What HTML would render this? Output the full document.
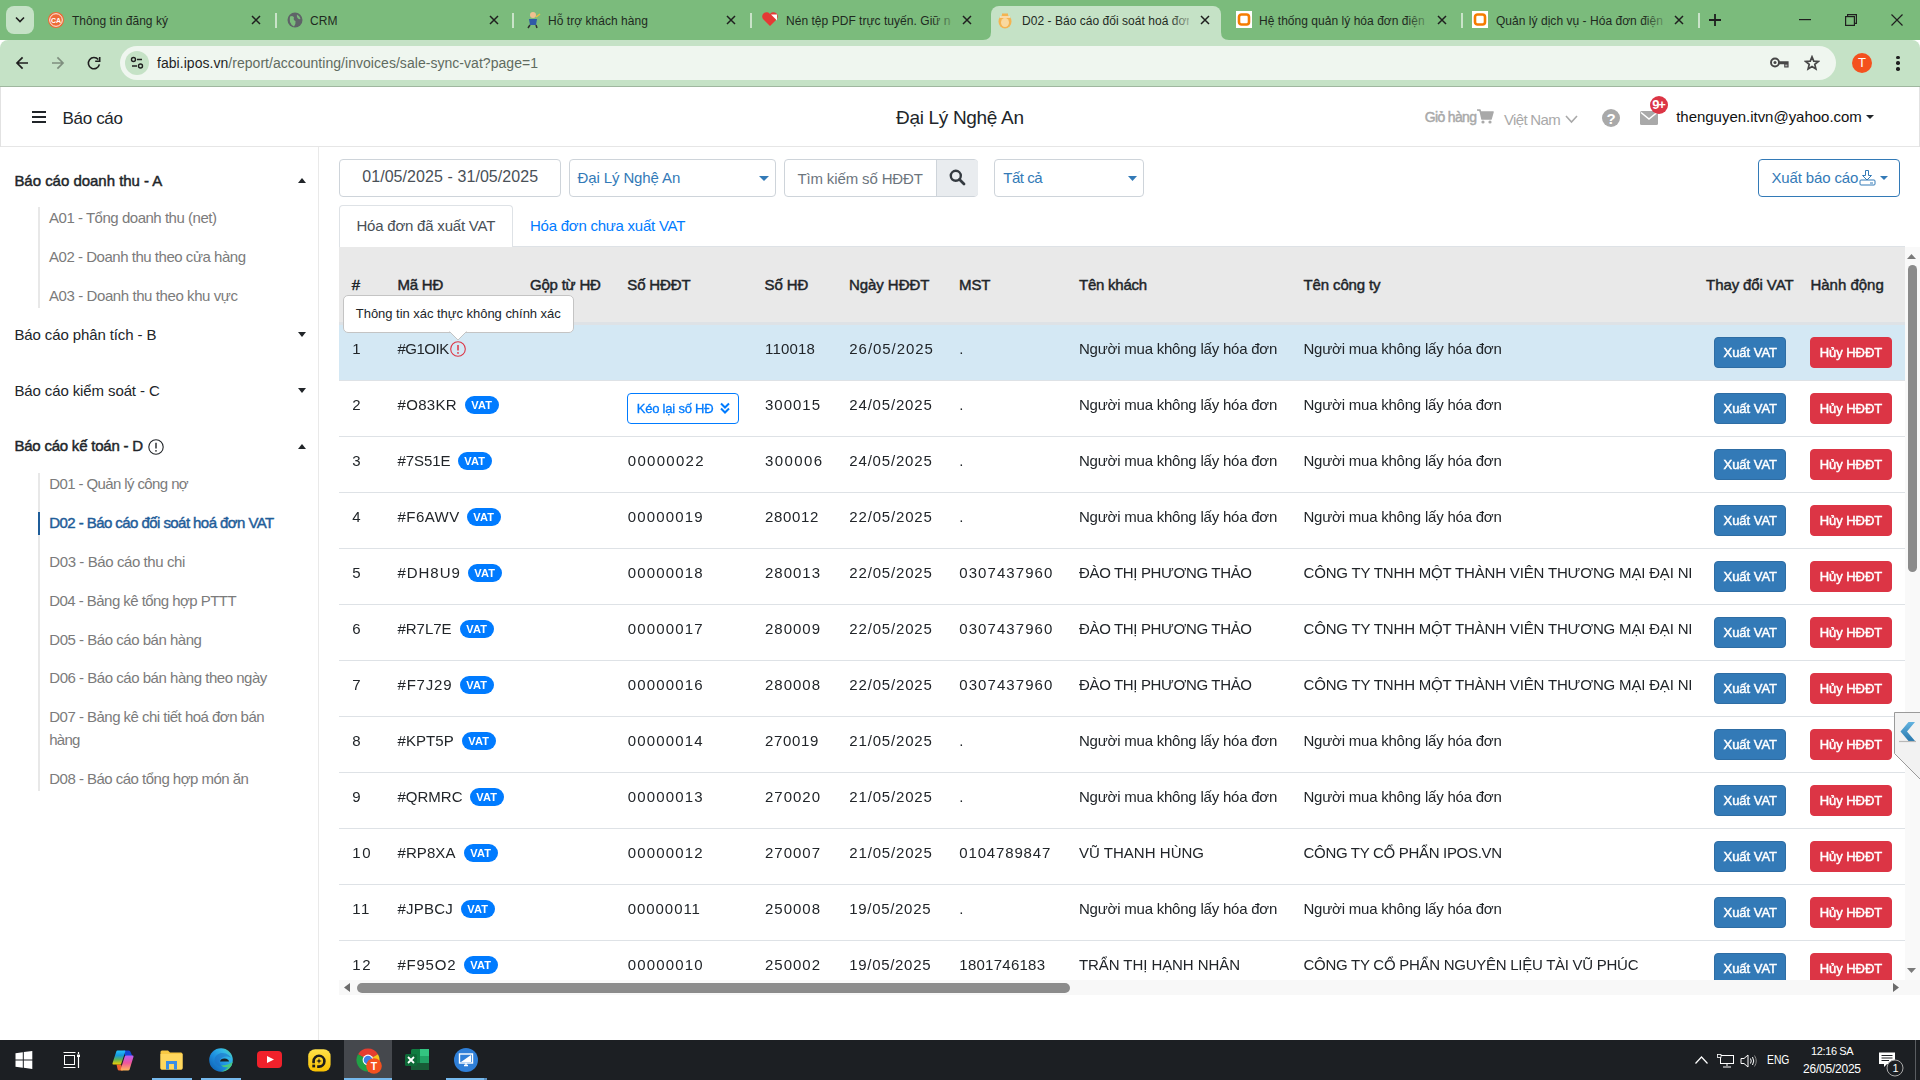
<!DOCTYPE html>
<html><head><meta charset="utf-8"><style>
html,body{margin:0;padding:0;width:1920px;height:1080px;overflow:hidden;background:#fff}
body{position:relative;font-family:"Liberation Sans",sans-serif}
.t{position:absolute;white-space:nowrap;font-family:"Liberation Sans",sans-serif}
</style></head><body>
<div style="position:absolute;left:0px;top:0px;width:1920px;height:40px;background:#7bbb7c"></div>
<div style="position:absolute;left:0px;top:40px;width:1920px;height:47px;background:#c5e2c6;border-radius:8px 8px 0 0"></div>
<div style="position:absolute;left:0px;top:86px;width:1920px;height:1px;background:#9fb79f"></div>
<div style="position:absolute;left:6px;top:6px;width:28px;height:28px;background:#c5e2c6;border-radius:8px"></div>
<svg style="position:absolute;left:14px;top:15px" width="12" height="10" viewBox="0 0 12 10"><path d="M2 2.5 L6 6.5 L10 2.5" stroke="#1f1f1f" stroke-width="1.6" fill="none"/></svg>
<div style="position:absolute;left:991px;top:6px;width:230px;height:34px;background:#c5e2c6;border-radius:8px 8px 0 0"></div>
<svg style="position:absolute;left:983px;top:32px" width="8" height="8"><path d="M0 8 Q8 8 8 0 L8 8 Z" fill="#c5e2c6"/></svg>
<svg style="position:absolute;left:1221px;top:32px" width="8" height="8"><path d="M8 8 Q0 8 0 0 L0 8 Z" fill="#c5e2c6"/></svg>
<div style="position:absolute;left:70px;top:4px;width:170px;height:32px;overflow:hidden">
<div class="t" style="left:2.00px;top:11.00px;font-size:12px;line-height:12px;color:#1f2a1f;letter-spacing:0.036px;">Thông tin đăng ký</div>
</div>
<div style="position:absolute;left:220px;top:10px;width:36px;height:20px;background:linear-gradient(90deg,rgba(0,0,0,0),#7bbb7c 80%)"></div>
<svg style="position:absolute;left:251px;top:15px" width="10" height="10" viewBox="0 0 10 10"><path d="M1 1L9 9M9 1L1 9" stroke="#1f1f1f" stroke-width="1.5"/></svg>
<div style="position:absolute;left:308px;top:4px;width:170px;height:32px;overflow:hidden">
<div class="t" style="left:2.00px;top:11.00px;font-size:12px;line-height:12px;color:#1f2a1f;letter-spacing:0.082px;">CRM</div>
</div>
<div style="position:absolute;left:458px;top:10px;width:36px;height:20px;background:linear-gradient(90deg,rgba(0,0,0,0),#7bbb7c 80%)"></div>
<svg style="position:absolute;left:489px;top:15px" width="10" height="10" viewBox="0 0 10 10"><path d="M1 1L9 9M9 1L1 9" stroke="#1f1f1f" stroke-width="1.5"/></svg>
<div style="position:absolute;left:546px;top:4px;width:169px;height:32px;overflow:hidden">
<div class="t" style="left:2.00px;top:11.00px;font-size:12px;line-height:12px;color:#1f2a1f;letter-spacing:0.037px;">Hỗ trợ khách hàng</div>
</div>
<div style="position:absolute;left:695px;top:10px;width:36px;height:20px;background:linear-gradient(90deg,rgba(0,0,0,0),#7bbb7c 80%)"></div>
<svg style="position:absolute;left:726px;top:15px" width="10" height="10" viewBox="0 0 10 10"><path d="M1 1L9 9M9 1L1 9" stroke="#1f1f1f" stroke-width="1.5"/></svg>
<div style="position:absolute;left:784px;top:4px;width:167px;height:32px;overflow:hidden">
<div class="t" style="left:2.00px;top:11.00px;font-size:12px;line-height:12px;color:#1f2a1f;letter-spacing:0.035px;">Nén tệp PDF trực tuyến. Giữ ng</div>
</div>
<div style="position:absolute;left:931px;top:10px;width:36px;height:20px;background:linear-gradient(90deg,rgba(0,0,0,0),#7bbb7c 80%)"></div>
<svg style="position:absolute;left:962px;top:15px" width="10" height="10" viewBox="0 0 10 10"><path d="M1 1L9 9M9 1L1 9" stroke="#1f1f1f" stroke-width="1.5"/></svg>
<div style="position:absolute;left:1020px;top:4px;width:169px;height:32px;overflow:hidden">
<div class="t" style="left:2.00px;top:11.00px;font-size:12px;line-height:12px;color:#1f2a1f;letter-spacing:0.035px;">D02 - Báo cáo đối soát hoá đơn</div>
</div>
<div style="position:absolute;left:1169px;top:10px;width:36px;height:20px;background:linear-gradient(90deg,rgba(0,0,0,0),#c5e2c6 80%)"></div>
<svg style="position:absolute;left:1200px;top:15px" width="10" height="10" viewBox="0 0 10 10"><path d="M1 1L9 9M9 1L1 9" stroke="#1f1f1f" stroke-width="1.5"/></svg>
<div style="position:absolute;left:1257px;top:4px;width:169px;height:32px;overflow:hidden">
<div class="t" style="left:2.00px;top:11.00px;font-size:12px;line-height:12px;color:#1f2a1f;letter-spacing:0.035px;">Hệ thống quản lý hóa đơn điện</div>
</div>
<div style="position:absolute;left:1406px;top:10px;width:36px;height:20px;background:linear-gradient(90deg,rgba(0,0,0,0),#7bbb7c 80%)"></div>
<svg style="position:absolute;left:1437px;top:15px" width="10" height="10" viewBox="0 0 10 10"><path d="M1 1L9 9M9 1L1 9" stroke="#1f1f1f" stroke-width="1.5"/></svg>
<div style="position:absolute;left:1494px;top:4px;width:169px;height:32px;overflow:hidden">
<div class="t" style="left:2.00px;top:11.00px;font-size:12px;line-height:12px;color:#1f2a1f;letter-spacing:0.034px;">Quản lý dịch vụ - Hóa đơn điện</div>
</div>
<div style="position:absolute;left:1643px;top:10px;width:36px;height:20px;background:linear-gradient(90deg,rgba(0,0,0,0),#7bbb7c 80%)"></div>
<svg style="position:absolute;left:1674px;top:15px" width="10" height="10" viewBox="0 0 10 10"><path d="M1 1L9 9M9 1L1 9" stroke="#1f1f1f" stroke-width="1.5"/></svg>
<div style="position:absolute;left:275px;top:13px;width:2px;height:15px;background:#c9e3c9"></div>
<div style="position:absolute;left:512px;top:13px;width:2px;height:15px;background:#c9e3c9"></div>
<div style="position:absolute;left:750px;top:13px;width:2px;height:15px;background:#c9e3c9"></div>
<div style="position:absolute;left:1461px;top:13px;width:2px;height:15px;background:#c9e3c9"></div>
<div style="position:absolute;left:1698px;top:13px;width:2px;height:15px;background:#c9e3c9"></div>
<svg style="position:absolute;left:48px;top:12px" width="16" height="16" viewBox="0 0 16 16"><circle cx="8" cy="8" r="8" fill="#ef6a37"/><circle cx="8" cy="8" r="6.3" fill="none" stroke="#fff" stroke-width="0.9"/><text x="8" y="10.6" font-family="Liberation Sans" font-weight="bold" font-size="7" fill="#fff" text-anchor="middle">CA</text></svg>
<svg style="position:absolute;left:287px;top:12px" width="16" height="16" viewBox="0 0 16 16"><circle cx="8" cy="8" r="7.5" fill="#5f6368"/><path d="M3 4.5Q6 3 7 5.5Q6 8 8.5 9Q9 12 7 14.5Q4 13 3 10Q2.5 7 3 4.5Z" fill="#7bbb7c"/><path d="M10 2.5Q13 4 13.5 7Q11.5 7.5 10.5 6Q9.5 4 10 2.5Z" fill="#7bbb7c"/></svg>
<svg style="position:absolute;left:525px;top:11px" width="16" height="18" viewBox="0 0 16 18"><circle cx="8" cy="4" r="3" fill="#f0c090"/><path d="M4 8H12L11 14H5Z" fill="#2f5aa8"/><path d="M5 14L3 17M11 14L12 17" stroke="#2f2f2f" stroke-width="1.5"/><path d="M11 6L15 3" stroke="#e8c040" stroke-width="1.5"/></svg>
<svg style="position:absolute;left:761px;top:11px" width="18" height="16" viewBox="0 0 18 16"><path d="M9 15 L2 8 A4 4 0 0 1 9 3 A4 4 0 0 1 16 8 Z" fill="#e53935"/><path d="M10 3.5 L16 3.5 L16 9.5 Z" fill="#fff"/></svg>
<svg style="position:absolute;left:997px;top:11px" width="16" height="18" viewBox="0 0 16 18"><ellipse cx="8" cy="10.5" rx="6.5" ry="7" fill="#f5b350"/><ellipse cx="8" cy="11.5" rx="4" ry="4.5" fill="#f9d9a0"/><path d="M3 6H13" stroke="#fff" stroke-width="1"/><path d="M5 3.5H11" stroke="#f5b350" stroke-width="2"/></svg>
<svg style="position:absolute;left:1236px;top:11px" width="16" height="17" viewBox="0 0 16 17"><rect width="16" height="17" fill="#fff"/><rect x="3" y="3.5" width="10" height="10" rx="2.5" fill="none" stroke="#f57c00" stroke-width="2.6"/></svg>
<svg style="position:absolute;left:1472px;top:11px" width="16" height="17" viewBox="0 0 16 17"><rect width="16" height="17" fill="#fff"/><rect x="3" y="3.5" width="10" height="10" rx="2.5" fill="none" stroke="#f57c00" stroke-width="2.6"/></svg>
<svg style="position:absolute;left:1708px;top:13px" width="14" height="14" viewBox="0 0 14 14"><path d="M7 1V13M1 7H13" stroke="#1f1f1f" stroke-width="1.8"/></svg>
<svg style="position:absolute;left:1799px;top:19px" width="12" height="2"><rect width="12" height="1.2" fill="#1f1f1f"/></svg>
<svg style="position:absolute;left:1845px;top:14px" width="12" height="12" viewBox="0 0 12 12"><rect x="0.6" y="2.6" width="8.8" height="8.8" fill="none" stroke="#1f1f1f" stroke-width="1.2"/><path d="M2.6 2.6V0.6H11.4V9.4H9.4" fill="none" stroke="#1f1f1f" stroke-width="1.2"/></svg>
<svg style="position:absolute;left:1891px;top:14px" width="12" height="12" viewBox="0 0 12 12"><path d="M0.5 0.5L11.5 11.5M11.5 0.5L0.5 11.5" stroke="#1f1f1f" stroke-width="1.2"/></svg>
<svg style="position:absolute;left:14px;top:55px" width="16" height="16" viewBox="0 0 16 16"><path d="M14 8H3M8.6 2.4L3 8L8.6 13.6" stroke="#1f1f1f" stroke-width="1.7" fill="none"/></svg>
<svg style="position:absolute;left:50px;top:55px" width="16" height="16" viewBox="0 0 16 16"><path d="M2 8H13M7.4 2.4L13 8L7.4 13.6" stroke="#7f8f7f" stroke-width="1.7" fill="none"/></svg>
<svg style="position:absolute;left:86px;top:55px" width="16" height="16" viewBox="0 0 16 16"><path d="M13.4 9.4A5.6 5.6 0 1 1 12.3 4.6" stroke="#1f1f1f" stroke-width="1.6" fill="none"/><path d="M9.2 6.3H13.7V1.9" stroke="#1f1f1f" stroke-width="1.6" fill="none"/></svg>
<div style="position:absolute;left:120px;top:46px;width:1716px;height:34px;background:#eff6ef;border-radius:17px"></div>
<div style="position:absolute;left:125px;top:51px;width:24px;height:24px;border-radius:50%;background:#c5e2c6"></div>
<svg style="position:absolute;left:129px;top:55px" width="16" height="16" viewBox="0 0 16 16"><circle cx="4.5" cy="4.5" r="2" fill="none" stroke="#1f1f1f" stroke-width="1.4"/><path d="M8 4.5H13" stroke="#1f1f1f" stroke-width="1.5"/><circle cx="11.5" cy="11" r="2" fill="none" stroke="#1f1f1f" stroke-width="1.4"/><path d="M3 11H8" stroke="#1f1f1f" stroke-width="1.5"/></svg>
<div class="t" style="left:157px;top:55px;font-size:14px;line-height:16px;color:#1f1f1f;letter-spacing:0.04px">fabi.ipos.vn<span style="color:#5f6b5f">/report/accounting/invoices/sale-sync-vat?page=1</span></div>
<svg style="position:absolute;left:1770px;top:57px" width="20" height="12" viewBox="0 0 20 12"><circle cx="5" cy="5.5" r="4" fill="none" stroke="#474747" stroke-width="1.9"/><circle cx="5" cy="5.5" r="1.5" fill="#474747"/><path d="M9 4.3H18.6V10.4H14.2V7.2H9Z" fill="#474747"/><rect x="15.2" y="7.6" width="2.2" height="1.8" fill="#b0b0b0"/></svg>
<svg style="position:absolute;left:1804px;top:55px" width="16" height="16" viewBox="0 0 24 24"><path d="M12 2.8L14.6 9.2L21.4 9.7L16.2 14.1L17.8 20.8L12 17.2L6.2 20.8L7.8 14.1L2.6 9.7L9.4 9.2Z" fill="none" stroke="#474747" stroke-width="2.6" stroke-linejoin="miter"/></svg>
<div style="position:absolute;left:1852px;top:53px;width:20px;height:20px;border-radius:50%;background:#f4511e;color:#fff;font:13px/20px Liberation Sans;text-align:center">T</div>
<div style="position:absolute;left:1896.25px;top:55.65px;width:3.5px;height:3.5px;border-radius:50%;background:#1f1f1f"></div>
<div style="position:absolute;left:1896.25px;top:61.35px;width:3.5px;height:3.5px;border-radius:50%;background:#1f1f1f"></div>
<div style="position:absolute;left:1896.25px;top:67.05px;width:3.5px;height:3.5px;border-radius:50%;background:#1f1f1f"></div>
<div style="position:absolute;left:0px;top:87px;width:1920px;height:953px;background:#fff"></div>
<div style="position:absolute;left:0px;top:146px;width:1920px;height:1px;background:#e6e6e6"></div>
<div style="position:absolute;left:32px;top:111px;width:14px;height:2px;background:#212529"></div>
<div style="position:absolute;left:32px;top:116px;width:14px;height:2px;background:#212529"></div>
<div style="position:absolute;left:32px;top:121px;width:14px;height:2px;background:#212529"></div>
<div style="position:absolute;left:0px;top:87px;width:1px;height:60px;background:#e2e2e2"></div>
<div style="position:absolute;left:1919px;top:87px;width:1px;height:60px;background:#e2e2e2"></div>
<div class="t" style="left:62.50px;top:110px;font-size:17px;line-height:17px;color:#212529;letter-spacing:-0.332px;">Báo cáo</div>
<div class="t" style="left:896.00px;top:108px;font-size:19px;line-height:19px;color:#212529;letter-spacing:-0.312px;">Đại Lý Nghệ An</div>
<div class="t" style="left:1424.70px;top:110px;font-size:14px;line-height:14px;-webkit-text-stroke:0.45px #a9a9a9;color:#a9a9a9;letter-spacing:-0.649px;">Giỏ hàng</div>
<svg style="position:absolute;left:1477px;top:109px" width="17" height="15" viewBox="0 0 17 15"><path d="M0 1H3L5 10H14L16 3H4" fill="#a9a9a9" stroke="#a9a9a9" stroke-width="1.6" stroke-linejoin="round"/><circle cx="6" cy="13" r="1.6" fill="#a9a9a9"/><circle cx="13" cy="13" r="1.6" fill="#a9a9a9"/></svg>
<div class="t" style="left:1504.00px;top:112px;font-size:15px;line-height:15px;color:#a9a9a9;letter-spacing:-0.675px;">Việt Nam</div>
<svg style="position:absolute;left:1565px;top:115px" width="13" height="9" viewBox="0 0 13 9"><path d="M1 1L6.5 7L12 1" stroke="#a9a9a9" stroke-width="1.6" fill="none"/></svg>
<div style="position:absolute;left:1602px;top:109px;width:18px;height:18px;border-radius:50%;background:#a9a9a9;color:#fff;font:bold 15px/19px Liberation Sans;text-align:center">?</div>
<svg style="position:absolute;left:1640px;top:111px" width="18" height="14" viewBox="0 0 18 14"><rect width="18" height="14" rx="1.5" fill="#a9a9a9"/><path d="M1 1.5L9 8L17 1.5" stroke="#fff" stroke-width="1.5" fill="none"/></svg>
<div style="position:absolute;left:1650px;top:96px;width:18px;height:18px;border-radius:50%;background:#dc3545;color:#fff;font:bold 13px/18px Liberation Sans;text-align:center;letter-spacing:-1.2px;text-indent:-1px">9+</div>
<div class="t" style="left:1676.20px;top:109px;font-size:15px;line-height:15px;color:#111;letter-spacing:-0.024px;">thenguyen.itvn@yahoo.com</div>
<svg style="position:absolute;left:1866px;top:115px" width="8" height="4"><path d="M0 0H8L4 4Z" fill="#212529"/></svg>
<div style="position:absolute;left:318px;top:147px;width:1px;height:893px;background:#e9e9e9"></div>
<div class="t" style="left:14.40px;top:173px;font-size:15px;line-height:15px;-webkit-text-stroke:0.45px #212529;color:#212529;letter-spacing:-0.025px;">Báo cáo doanh thu - A</div>
<svg style="position:absolute;left:298px;top:178px" width="8" height="5"><path d="M0 5H8L4.0 0Z" fill="#212529"/></svg>
<div style="position:absolute;left:38px;top:207px;width:2px;height:101px;background:#e8e8e8"></div>
<div class="t" style="left:49.00px;top:210px;font-size:15px;line-height:15px;color:#7b7b7b;letter-spacing:-0.474px;">A01 - Tổng doanh thu (net)</div>
<div class="t" style="left:49.00px;top:249px;font-size:15px;line-height:15px;color:#7b7b7b;letter-spacing:-0.472px;">A02 - Doanh thu theo cửa hàng</div>
<div class="t" style="left:49.00px;top:288px;font-size:15px;line-height:15px;color:#7b7b7b;letter-spacing:-0.414px;">A03 - Doanh thu theo khu vực</div>
<div class="t" style="left:14.40px;top:327px;font-size:15px;line-height:15px;color:#212529;letter-spacing:-0.111px;">Báo cáo phân tích - B</div>
<svg style="position:absolute;left:298px;top:332px" width="8" height="5"><path d="M0 0H8L4.0 5Z" fill="#212529"/></svg>
<div class="t" style="left:14.40px;top:383px;font-size:15px;line-height:15px;color:#212529;letter-spacing:-0.110px;">Báo cáo kiểm soát - C</div>
<svg style="position:absolute;left:298px;top:388px" width="8" height="5"><path d="M0 0H8L4.0 5Z" fill="#212529"/></svg>
<div class="t" style="left:14.40px;top:438px;font-size:15px;line-height:15px;-webkit-text-stroke:0.45px #212529;color:#212529;letter-spacing:-0.217px;">Báo cáo kế toán - D</div>
<svg style="position:absolute;left:148px;top:439px" width="16" height="16" viewBox="0 0 16 16"><circle cx="8" cy="8" r="7.2" fill="none" stroke="#212529" stroke-width="1.1"/><path d="M8 3.8V9.6" stroke="#212529" stroke-width="1.4"/><circle cx="8" cy="11.8" r="0.85" fill="#212529"/></svg>
<svg style="position:absolute;left:298px;top:444px" width="8" height="5"><path d="M0 5H8L4.0 0Z" fill="#212529"/></svg>
<div style="position:absolute;left:38px;top:473px;width:2px;height:318px;background:#e8e8e8"></div>
<div style="position:absolute;left:37.5px;top:512px;width:2.5px;height:23px;background:#1f5d99"></div>
<div class="t" style="left:49.30px;top:476px;font-size:15px;line-height:15px;color:#7b7b7b;letter-spacing:-0.609px;">D01 - Quản lý công nợ</div>
<div class="t" style="left:49.30px;top:554px;font-size:15px;line-height:15px;color:#7b7b7b;letter-spacing:-0.411px;">D03 - Báo cáo thu chi</div>
<div class="t" style="left:49.30px;top:593px;font-size:15px;line-height:15px;color:#7b7b7b;letter-spacing:-0.550px;">D04 - Bảng kê tổng hợp PTTT</div>
<div class="t" style="left:49.30px;top:632px;font-size:15px;line-height:15px;color:#7b7b7b;letter-spacing:-0.476px;">D05 - Báo cáo bán hàng</div>
<div class="t" style="left:49.30px;top:670px;font-size:15px;line-height:15px;color:#7b7b7b;letter-spacing:-0.473px;">D06 - Báo cáo bán hàng theo ngày</div>
<div class="t" style="left:49.30px;top:709px;font-size:15px;line-height:15px;color:#7b7b7b;letter-spacing:-0.521px;">D07 - Bảng kê chi tiết hoá đơn bán</div>
<div class="t" style="left:49.30px;top:732px;font-size:15px;line-height:15px;color:#7b7b7b;letter-spacing:-0.792px;">hàng</div>
<div class="t" style="left:49.30px;top:771px;font-size:15px;line-height:15px;color:#7b7b7b;letter-spacing:-0.519px;">D08 - Báo cáo tổng hợp món ăn</div>
<div class="t" style="left:49.30px;top:515px;font-size:15px;line-height:15px;-webkit-text-stroke:0.45px #1f5d99;color:#1f5d99;letter-spacing:-0.564px;">D02 - Báo cáo đối soát hoá đơn VAT</div>
<div style="position:absolute;left:339px;top:159px;width:222px;height:38px;box-sizing:border-box;border:1px solid #ced4da;border-radius:4px"></div>
<div class="t" style="left:362.20px;top:169px;font-size:16px;line-height:16px;color:#495057;letter-spacing:0.073px;">01/05/2025 - 31/05/2025</div>
<div style="position:absolute;left:569px;top:159px;width:207px;height:38px;box-sizing:border-box;border:1px solid #ced4da;border-radius:4px"></div>
<div class="t" style="left:577.50px;top:170px;font-size:15px;line-height:15px;color:#337ab7;letter-spacing:-0.112px;">Đại Lý Nghệ An</div>
<svg style="position:absolute;left:759px;top:176px" width="10" height="5"><path d="M0 0H10L5.0 5Z" fill="#337ab7"/></svg>
<div style="position:absolute;left:784px;top:159px;width:194px;height:38px;box-sizing:border-box;border:1px solid #ced4da;border-radius:4px;overflow:hidden"></div>
<div style="position:absolute;left:936px;top:160px;width:41px;height:36px;background:#e9ecef;border-left:1px solid #ced4da;border-radius:0 3px 3px 0"></div>
<div class="t" style="left:797.40px;top:171px;font-size:15px;line-height:15px;color:#6c757d;letter-spacing:-0.133px;">Tìm kiếm số HĐĐT</div>
<svg style="position:absolute;left:949px;top:169px" width="17" height="17" viewBox="0 0 17 17"><circle cx="6.8" cy="6.8" r="5" fill="none" stroke="#343a40" stroke-width="2.4"/><path d="M10.5 10.5L15 15" stroke="#343a40" stroke-width="2.8" stroke-linecap="round"/></svg>
<div style="position:absolute;left:994px;top:159px;width:150px;height:38px;box-sizing:border-box;border:1px solid #ced4da;border-radius:4px"></div>
<div class="t" style="left:1003.20px;top:170px;font-size:15px;line-height:15px;color:#337ab7;letter-spacing:-0.435px;">Tất cả</div>
<svg style="position:absolute;left:1128px;top:176px" width="9" height="5"><path d="M0 0H9L4.5 5Z" fill="#337ab7"/></svg>
<div style="position:absolute;left:1758px;top:159px;width:142px;height:38px;box-sizing:border-box;border:1px solid #337ab7;border-radius:4px"></div>
<div class="t" style="left:1771.40px;top:170px;font-size:15px;line-height:15px;color:#337ab7;letter-spacing:-0.130px;">Xuất báo cáo</div>
<svg style="position:absolute;left:1859px;top:169px" width="17" height="17" viewBox="0 0 17 17"><path d="M6.5 1.5H9.5V6.5H12.5L8 11L3.5 6.5H6.5Z" fill="none" stroke="#337ab7" stroke-width="1"/><rect x="1" y="11" width="15" height="5" rx="1" fill="none" stroke="#337ab7" stroke-width="1"/><path d="M11 14H14" stroke="#337ab7" stroke-width="1"/></svg>
<svg style="position:absolute;left:1879.5px;top:176px" width="8" height="4"><path d="M0 0H8L4.0 4Z" fill="#337ab7"/></svg>
<div style="position:absolute;left:339px;top:246px;width:1566px;height:1px;background:#dee2e6"></div>
<div style="position:absolute;left:339px;top:205px;width:174px;height:42px;box-sizing:border-box;border:1px solid #dee2e6;border-bottom:none;border-radius:4px 4px 0 0;background:#fff"></div>
<div class="t" style="left:356.40px;top:218px;font-size:15px;line-height:15px;color:#495057;letter-spacing:-0.207px;">Hóa đơn đã xuất VAT</div>
<div class="t" style="left:530.00px;top:218px;font-size:15px;line-height:15px;color:#007bff;letter-spacing:-0.245px;">Hóa đơn chưa xuất VAT</div>
<div style="position:absolute;left:339px;top:247px;width:1566px;height:77px;background:#e9e9e9"></div>
<div style="position:absolute;left:339px;top:322px;width:1566px;height:3px;background:#dee2e6"></div>
<div class="t" style="left:351.70px;top:277px;font-size:15px;line-height:15px;-webkit-text-stroke:0.45px #212529;color:#212529;">#</div>
<div class="t" style="left:397.50px;top:277px;font-size:15px;line-height:15px;-webkit-text-stroke:0.45px #212529;color:#212529;letter-spacing:-0.213px;">Mã HĐ</div>
<div class="t" style="left:530.00px;top:277px;font-size:15px;line-height:15px;-webkit-text-stroke:0.45px #212529;color:#212529;letter-spacing:-0.216px;">Gộp từ HĐ</div>
<div class="t" style="left:627.30px;top:277px;font-size:15px;line-height:15px;-webkit-text-stroke:0.45px #212529;color:#212529;letter-spacing:-0.150px;">Số HĐĐT</div>
<div class="t" style="left:764.60px;top:277px;font-size:15px;line-height:15px;-webkit-text-stroke:0.45px #212529;color:#212529;letter-spacing:-0.119px;">Số HĐ</div>
<div class="t" style="left:848.90px;top:277px;font-size:15px;line-height:15px;-webkit-text-stroke:0.45px #212529;color:#212529;letter-spacing:-0.044px;">Ngày HĐĐT</div>
<div class="t" style="left:959.00px;top:277px;font-size:15px;line-height:15px;-webkit-text-stroke:0.45px #212529;color:#212529;letter-spacing:-0.075px;">MST</div>
<div class="t" style="left:1079.00px;top:277px;font-size:15px;line-height:15px;-webkit-text-stroke:0.45px #212529;color:#212529;letter-spacing:-0.231px;">Tên khách</div>
<div class="t" style="left:1303.60px;top:277px;font-size:15px;line-height:15px;-webkit-text-stroke:0.45px #212529;color:#212529;letter-spacing:-0.138px;">Tên công ty</div>
<div class="t" style="left:1706.10px;top:277px;font-size:15px;line-height:15px;-webkit-text-stroke:0.45px #212529;color:#212529;letter-spacing:-0.105px;">Thay đổi VAT</div>
<div class="t" style="left:1810.40px;top:277px;font-size:15px;line-height:15px;-webkit-text-stroke:0.45px #212529;color:#212529;letter-spacing:-0.003px;">Hành động</div>
<div style="position:absolute;left:339px;top:324px;width:1566px;height:656px;overflow:hidden;will-change:transform">
<div style="position:absolute;left:0.00px;top:1.00px;width:1566px;height:56px;background:#d4e8f4"></div>
<div class="t" style="left:13.30px;top:17.00px;font-size:15px;line-height:15px;color:#212529;">1</div>
<div class="t" style="left:58.50px;top:17.00px;font-size:15px;line-height:15px;color:#212529;letter-spacing:-0.505px;">#G1OIK</div>
<div class="t" style="left:426.00px;top:17.00px;font-size:15px;line-height:15px;color:#212529;letter-spacing:0.205px;">110018</div>
<div class="t" style="left:510.30px;top:17.00px;font-size:15px;line-height:15px;color:#212529;letter-spacing:0.947px;">26/05/2025</div>
<div class="t" style="left:620.30px;top:17.00px;font-size:15px;line-height:15px;color:#212529;">.</div>
<div class="t" style="left:740.00px;top:17.00px;font-size:15px;line-height:15px;color:#212529;letter-spacing:-0.219px;">Người mua không lấy hóa đơn</div>
<div class="t" style="left:964.50px;top:17.00px;font-size:15px;line-height:15px;color:#212529;letter-spacing:-0.219px;">Người mua không lấy hóa đơn</div>
<div style="position:absolute;left:1375.00px;top:13.00px;width:72px;height:31px;box-sizing:border-box;background:#337ab7;border:1px solid #2e6da4;border-radius:4px"></div>
<div class="t" style="left:1384.50px;top:22.00px;font-size:13px;line-height:13px;-webkit-text-stroke:0.45px #fff;color:#fff;letter-spacing:-0.027px;">Xuất VAT</div>
<div style="position:absolute;left:1471.00px;top:13.00px;width:82px;height:31px;box-sizing:border-box;background:#dc3545;border:1px solid #dc3545;border-radius:4px"></div>
<div class="t" style="left:1480.70px;top:22.00px;font-size:13px;line-height:13px;-webkit-text-stroke:0.45px #fff;color:#fff;letter-spacing:-0.051px;">Hủy HĐĐT</div>
<div style="position:absolute;left:0.00px;top:56.00px;width:1566px;height:1px;background:#dee2e6"></div>
<div class="t" style="left:13.30px;top:73.00px;font-size:15px;line-height:15px;color:#212529;">2</div>
<div class="t" style="left:58.50px;top:73.00px;font-size:15px;line-height:15px;color:#212529;letter-spacing:0.335px;">#O83KR</div>
<div class="t" style="left:426.00px;top:73.00px;font-size:15px;line-height:15px;color:#212529;letter-spacing:1.001px;">300015</div>
<div class="t" style="left:510.30px;top:73.00px;font-size:15px;line-height:15px;color:#212529;letter-spacing:0.825px;">24/05/2025</div>
<div class="t" style="left:620.30px;top:73.00px;font-size:15px;line-height:15px;color:#212529;">.</div>
<div class="t" style="left:740.00px;top:73.00px;font-size:15px;line-height:15px;color:#212529;letter-spacing:-0.219px;">Người mua không lấy hóa đơn</div>
<div class="t" style="left:964.50px;top:73.00px;font-size:15px;line-height:15px;color:#212529;letter-spacing:-0.219px;">Người mua không lấy hóa đơn</div>
<div style="position:absolute;left:126.00px;top:72.00px;width:34px;height:18px;background:#007bff;border-radius:9px"></div>
<div class="t" style="left:132.30px;top:76.00px;font-size:11px;line-height:11px;font-weight:700;color:#fff;letter-spacing:0.125px;">VAT</div>
<div style="position:absolute;left:1375.00px;top:69.00px;width:72px;height:31px;box-sizing:border-box;background:#337ab7;border:1px solid #2e6da4;border-radius:4px"></div>
<div class="t" style="left:1384.50px;top:78.00px;font-size:13px;line-height:13px;-webkit-text-stroke:0.45px #fff;color:#fff;letter-spacing:-0.027px;">Xuất VAT</div>
<div style="position:absolute;left:1471.00px;top:69.00px;width:82px;height:31px;box-sizing:border-box;background:#dc3545;border:1px solid #dc3545;border-radius:4px"></div>
<div class="t" style="left:1480.70px;top:78.00px;font-size:13px;line-height:13px;-webkit-text-stroke:0.45px #fff;color:#fff;letter-spacing:-0.051px;">Hủy HĐĐT</div>
<div style="position:absolute;left:0.00px;top:112.00px;width:1566px;height:1px;background:#dee2e6"></div>
<div class="t" style="left:13.30px;top:129.00px;font-size:15px;line-height:15px;color:#212529;">3</div>
<div class="t" style="left:58.50px;top:129.00px;font-size:15px;line-height:15px;color:#212529;letter-spacing:-0.080px;">#7S51E</div>
<div class="t" style="left:288.80px;top:129.00px;font-size:15px;line-height:15px;color:#212529;letter-spacing:1.279px;">00000022</div>
<div class="t" style="left:426.00px;top:129.00px;font-size:15px;line-height:15px;color:#212529;letter-spacing:1.395px;">300006</div>
<div class="t" style="left:510.30px;top:129.00px;font-size:15px;line-height:15px;color:#212529;letter-spacing:0.825px;">24/05/2025</div>
<div class="t" style="left:620.30px;top:129.00px;font-size:15px;line-height:15px;color:#212529;">.</div>
<div class="t" style="left:740.00px;top:129.00px;font-size:15px;line-height:15px;color:#212529;letter-spacing:-0.219px;">Người mua không lấy hóa đơn</div>
<div class="t" style="left:964.50px;top:129.00px;font-size:15px;line-height:15px;color:#212529;letter-spacing:-0.219px;">Người mua không lấy hóa đơn</div>
<div style="position:absolute;left:119.00px;top:128.00px;width:34px;height:18px;background:#007bff;border-radius:9px"></div>
<div class="t" style="left:125.30px;top:132.00px;font-size:11px;line-height:11px;font-weight:700;color:#fff;letter-spacing:0.125px;">VAT</div>
<div style="position:absolute;left:1375.00px;top:125.00px;width:72px;height:31px;box-sizing:border-box;background:#337ab7;border:1px solid #2e6da4;border-radius:4px"></div>
<div class="t" style="left:1384.50px;top:134.00px;font-size:13px;line-height:13px;-webkit-text-stroke:0.45px #fff;color:#fff;letter-spacing:-0.027px;">Xuất VAT</div>
<div style="position:absolute;left:1471.00px;top:125.00px;width:82px;height:31px;box-sizing:border-box;background:#dc3545;border:1px solid #dc3545;border-radius:4px"></div>
<div class="t" style="left:1480.70px;top:134.00px;font-size:13px;line-height:13px;-webkit-text-stroke:0.45px #fff;color:#fff;letter-spacing:-0.051px;">Hủy HĐĐT</div>
<div style="position:absolute;left:0.00px;top:168.00px;width:1566px;height:1px;background:#dee2e6"></div>
<div class="t" style="left:13.30px;top:185.00px;font-size:15px;line-height:15px;color:#212529;">4</div>
<div class="t" style="left:58.50px;top:185.00px;font-size:15px;line-height:15px;color:#212529;letter-spacing:0.445px;">#F6AWV</div>
<div class="t" style="left:288.80px;top:185.00px;font-size:15px;line-height:15px;color:#212529;letter-spacing:1.136px;">00000019</div>
<div class="t" style="left:426.00px;top:185.00px;font-size:15px;line-height:15px;color:#212529;letter-spacing:0.635px;">280012</div>
<div class="t" style="left:510.30px;top:185.00px;font-size:15px;line-height:15px;color:#212529;letter-spacing:0.834px;">22/05/2025</div>
<div class="t" style="left:620.30px;top:185.00px;font-size:15px;line-height:15px;color:#212529;">.</div>
<div class="t" style="left:740.00px;top:185.00px;font-size:15px;line-height:15px;color:#212529;letter-spacing:-0.219px;">Người mua không lấy hóa đơn</div>
<div class="t" style="left:964.50px;top:185.00px;font-size:15px;line-height:15px;color:#212529;letter-spacing:-0.219px;">Người mua không lấy hóa đơn</div>
<div style="position:absolute;left:128.00px;top:184.00px;width:34px;height:18px;background:#007bff;border-radius:9px"></div>
<div class="t" style="left:134.30px;top:188.00px;font-size:11px;line-height:11px;font-weight:700;color:#fff;letter-spacing:0.125px;">VAT</div>
<div style="position:absolute;left:1375.00px;top:181.00px;width:72px;height:31px;box-sizing:border-box;background:#337ab7;border:1px solid #2e6da4;border-radius:4px"></div>
<div class="t" style="left:1384.50px;top:190.00px;font-size:13px;line-height:13px;-webkit-text-stroke:0.45px #fff;color:#fff;letter-spacing:-0.027px;">Xuất VAT</div>
<div style="position:absolute;left:1471.00px;top:181.00px;width:82px;height:31px;box-sizing:border-box;background:#dc3545;border:1px solid #dc3545;border-radius:4px"></div>
<div class="t" style="left:1480.70px;top:190.00px;font-size:13px;line-height:13px;-webkit-text-stroke:0.45px #fff;color:#fff;letter-spacing:-0.051px;">Hủy HĐĐT</div>
<div style="position:absolute;left:0.00px;top:224.00px;width:1566px;height:1px;background:#dee2e6"></div>
<div class="t" style="left:13.30px;top:241.00px;font-size:15px;line-height:15px;color:#212529;">5</div>
<div class="t" style="left:58.50px;top:241.00px;font-size:15px;line-height:15px;color:#212529;letter-spacing:0.955px;">#DH8U9</div>
<div class="t" style="left:288.80px;top:241.00px;font-size:15px;line-height:15px;color:#212529;letter-spacing:1.144px;">00000018</div>
<div class="t" style="left:426.00px;top:241.00px;font-size:15px;line-height:15px;color:#212529;letter-spacing:1.001px;">280013</div>
<div class="t" style="left:510.30px;top:241.00px;font-size:15px;line-height:15px;color:#212529;letter-spacing:0.834px;">22/05/2025</div>
<div class="t" style="left:620.30px;top:241.00px;font-size:15px;line-height:15px;color:#212529;letter-spacing:1.067px;">0307437960</div>
<div class="t" style="left:740.00px;top:241.00px;font-size:15px;line-height:15px;color:#212529;letter-spacing:-0.351px;">ĐÀO THỊ PHƯƠNG THẢO</div>
<div class="t" style="left:964.50px;top:241.00px;font-size:15px;line-height:15px;color:#212529;letter-spacing:-0.171px;">CÔNG TY TNHH MỘT THÀNH VIÊN THƯƠNG MẠI ĐẠI NI</div>
<div style="position:absolute;left:129.00px;top:240.00px;width:34px;height:18px;background:#007bff;border-radius:9px"></div>
<div class="t" style="left:135.30px;top:244.00px;font-size:11px;line-height:11px;font-weight:700;color:#fff;letter-spacing:0.125px;">VAT</div>
<div style="position:absolute;left:1375.00px;top:237.00px;width:72px;height:31px;box-sizing:border-box;background:#337ab7;border:1px solid #2e6da4;border-radius:4px"></div>
<div class="t" style="left:1384.50px;top:246.00px;font-size:13px;line-height:13px;-webkit-text-stroke:0.45px #fff;color:#fff;letter-spacing:-0.027px;">Xuất VAT</div>
<div style="position:absolute;left:1471.00px;top:237.00px;width:82px;height:31px;box-sizing:border-box;background:#dc3545;border:1px solid #dc3545;border-radius:4px"></div>
<div class="t" style="left:1480.70px;top:246.00px;font-size:13px;line-height:13px;-webkit-text-stroke:0.45px #fff;color:#fff;letter-spacing:-0.051px;">Hủy HĐĐT</div>
<div style="position:absolute;left:0.00px;top:280.00px;width:1566px;height:1px;background:#dee2e6"></div>
<div class="t" style="left:13.30px;top:297.00px;font-size:15px;line-height:15px;color:#212529;">6</div>
<div class="t" style="left:58.50px;top:297.00px;font-size:15px;line-height:15px;color:#212529;letter-spacing:-0.045px;">#R7L7E</div>
<div class="t" style="left:288.80px;top:297.00px;font-size:15px;line-height:15px;color:#212529;letter-spacing:1.144px;">00000017</div>
<div class="t" style="left:426.00px;top:297.00px;font-size:15px;line-height:15px;color:#212529;letter-spacing:1.001px;">280009</div>
<div class="t" style="left:510.30px;top:297.00px;font-size:15px;line-height:15px;color:#212529;letter-spacing:0.834px;">22/05/2025</div>
<div class="t" style="left:620.30px;top:297.00px;font-size:15px;line-height:15px;color:#212529;letter-spacing:1.067px;">0307437960</div>
<div class="t" style="left:740.00px;top:297.00px;font-size:15px;line-height:15px;color:#212529;letter-spacing:-0.351px;">ĐÀO THỊ PHƯƠNG THẢO</div>
<div class="t" style="left:964.50px;top:297.00px;font-size:15px;line-height:15px;color:#212529;letter-spacing:-0.171px;">CÔNG TY TNHH MỘT THÀNH VIÊN THƯƠNG MẠI ĐẠI NI</div>
<div style="position:absolute;left:121.00px;top:296.00px;width:34px;height:18px;background:#007bff;border-radius:9px"></div>
<div class="t" style="left:127.30px;top:300.00px;font-size:11px;line-height:11px;font-weight:700;color:#fff;letter-spacing:0.125px;">VAT</div>
<div style="position:absolute;left:1375.00px;top:293.00px;width:72px;height:31px;box-sizing:border-box;background:#337ab7;border:1px solid #2e6da4;border-radius:4px"></div>
<div class="t" style="left:1384.50px;top:302.00px;font-size:13px;line-height:13px;-webkit-text-stroke:0.45px #fff;color:#fff;letter-spacing:-0.027px;">Xuất VAT</div>
<div style="position:absolute;left:1471.00px;top:293.00px;width:82px;height:31px;box-sizing:border-box;background:#dc3545;border:1px solid #dc3545;border-radius:4px"></div>
<div class="t" style="left:1480.70px;top:302.00px;font-size:13px;line-height:13px;-webkit-text-stroke:0.45px #fff;color:#fff;letter-spacing:-0.051px;">Hủy HĐĐT</div>
<div style="position:absolute;left:0.00px;top:336.00px;width:1566px;height:1px;background:#dee2e6"></div>
<div class="t" style="left:13.30px;top:353.00px;font-size:15px;line-height:15px;color:#212529;">7</div>
<div class="t" style="left:58.50px;top:353.00px;font-size:15px;line-height:15px;color:#212529;letter-spacing:0.795px;">#F7J29</div>
<div class="t" style="left:288.80px;top:353.00px;font-size:15px;line-height:15px;color:#212529;letter-spacing:1.144px;">00000016</div>
<div class="t" style="left:426.00px;top:353.00px;font-size:15px;line-height:15px;color:#212529;letter-spacing:1.001px;">280008</div>
<div class="t" style="left:510.30px;top:353.00px;font-size:15px;line-height:15px;color:#212529;letter-spacing:0.834px;">22/05/2025</div>
<div class="t" style="left:620.30px;top:353.00px;font-size:15px;line-height:15px;color:#212529;letter-spacing:1.067px;">0307437960</div>
<div class="t" style="left:740.00px;top:353.00px;font-size:15px;line-height:15px;color:#212529;letter-spacing:-0.351px;">ĐÀO THỊ PHƯƠNG THẢO</div>
<div class="t" style="left:964.50px;top:353.00px;font-size:15px;line-height:15px;color:#212529;letter-spacing:-0.171px;">CÔNG TY TNHH MỘT THÀNH VIÊN THƯƠNG MẠI ĐẠI NI</div>
<div style="position:absolute;left:121.00px;top:352.00px;width:34px;height:18px;background:#007bff;border-radius:9px"></div>
<div class="t" style="left:127.30px;top:356.00px;font-size:11px;line-height:11px;font-weight:700;color:#fff;letter-spacing:0.125px;">VAT</div>
<div style="position:absolute;left:1375.00px;top:349.00px;width:72px;height:31px;box-sizing:border-box;background:#337ab7;border:1px solid #2e6da4;border-radius:4px"></div>
<div class="t" style="left:1384.50px;top:358.00px;font-size:13px;line-height:13px;-webkit-text-stroke:0.45px #fff;color:#fff;letter-spacing:-0.027px;">Xuất VAT</div>
<div style="position:absolute;left:1471.00px;top:349.00px;width:82px;height:31px;box-sizing:border-box;background:#dc3545;border:1px solid #dc3545;border-radius:4px"></div>
<div class="t" style="left:1480.70px;top:358.00px;font-size:13px;line-height:13px;-webkit-text-stroke:0.45px #fff;color:#fff;letter-spacing:-0.051px;">Hủy HĐĐT</div>
<div style="position:absolute;left:0.00px;top:392.00px;width:1566px;height:1px;background:#dee2e6"></div>
<div class="t" style="left:13.30px;top:409.00px;font-size:15px;line-height:15px;color:#212529;">8</div>
<div class="t" style="left:58.50px;top:409.00px;font-size:15px;line-height:15px;color:#212529;letter-spacing:0.085px;">#KPT5P</div>
<div class="t" style="left:288.80px;top:409.00px;font-size:15px;line-height:15px;color:#212529;letter-spacing:1.144px;">00000014</div>
<div class="t" style="left:426.00px;top:409.00px;font-size:15px;line-height:15px;color:#212529;letter-spacing:0.635px;">270019</div>
<div class="t" style="left:510.30px;top:409.00px;font-size:15px;line-height:15px;color:#212529;letter-spacing:0.834px;">21/05/2025</div>
<div class="t" style="left:620.30px;top:409.00px;font-size:15px;line-height:15px;color:#212529;">.</div>
<div class="t" style="left:740.00px;top:409.00px;font-size:15px;line-height:15px;color:#212529;letter-spacing:-0.219px;">Người mua không lấy hóa đơn</div>
<div class="t" style="left:964.50px;top:409.00px;font-size:15px;line-height:15px;color:#212529;letter-spacing:-0.219px;">Người mua không lấy hóa đơn</div>
<div style="position:absolute;left:123.00px;top:408.00px;width:34px;height:18px;background:#007bff;border-radius:9px"></div>
<div class="t" style="left:129.30px;top:412.00px;font-size:11px;line-height:11px;font-weight:700;color:#fff;letter-spacing:0.125px;">VAT</div>
<div style="position:absolute;left:1375.00px;top:405.00px;width:72px;height:31px;box-sizing:border-box;background:#337ab7;border:1px solid #2e6da4;border-radius:4px"></div>
<div class="t" style="left:1384.50px;top:414.00px;font-size:13px;line-height:13px;-webkit-text-stroke:0.45px #fff;color:#fff;letter-spacing:-0.027px;">Xuất VAT</div>
<div style="position:absolute;left:1471.00px;top:405.00px;width:82px;height:31px;box-sizing:border-box;background:#dc3545;border:1px solid #dc3545;border-radius:4px"></div>
<div class="t" style="left:1480.70px;top:414.00px;font-size:13px;line-height:13px;-webkit-text-stroke:0.45px #fff;color:#fff;letter-spacing:-0.051px;">Hủy HĐĐT</div>
<div style="position:absolute;left:0.00px;top:448.00px;width:1566px;height:1px;background:#dee2e6"></div>
<div class="t" style="left:13.30px;top:465.00px;font-size:15px;line-height:15px;color:#212529;">9</div>
<div class="t" style="left:58.50px;top:465.00px;font-size:15px;line-height:15px;color:#212529;letter-spacing:-0.005px;">#QRMRC</div>
<div class="t" style="left:288.80px;top:465.00px;font-size:15px;line-height:15px;color:#212529;letter-spacing:1.144px;">00000013</div>
<div class="t" style="left:426.00px;top:465.00px;font-size:15px;line-height:15px;color:#212529;letter-spacing:1.001px;">270020</div>
<div class="t" style="left:510.30px;top:465.00px;font-size:15px;line-height:15px;color:#212529;letter-spacing:0.834px;">21/05/2025</div>
<div class="t" style="left:620.30px;top:465.00px;font-size:15px;line-height:15px;color:#212529;">.</div>
<div class="t" style="left:740.00px;top:465.00px;font-size:15px;line-height:15px;color:#212529;letter-spacing:-0.219px;">Người mua không lấy hóa đơn</div>
<div class="t" style="left:964.50px;top:465.00px;font-size:15px;line-height:15px;color:#212529;letter-spacing:-0.219px;">Người mua không lấy hóa đơn</div>
<div style="position:absolute;left:131.00px;top:464.00px;width:34px;height:18px;background:#007bff;border-radius:9px"></div>
<div class="t" style="left:137.30px;top:468.00px;font-size:11px;line-height:11px;font-weight:700;color:#fff;letter-spacing:0.125px;">VAT</div>
<div style="position:absolute;left:1375.00px;top:461.00px;width:72px;height:31px;box-sizing:border-box;background:#337ab7;border:1px solid #2e6da4;border-radius:4px"></div>
<div class="t" style="left:1384.50px;top:470.00px;font-size:13px;line-height:13px;-webkit-text-stroke:0.45px #fff;color:#fff;letter-spacing:-0.027px;">Xuất VAT</div>
<div style="position:absolute;left:1471.00px;top:461.00px;width:82px;height:31px;box-sizing:border-box;background:#dc3545;border:1px solid #dc3545;border-radius:4px"></div>
<div class="t" style="left:1480.70px;top:470.00px;font-size:13px;line-height:13px;-webkit-text-stroke:0.45px #fff;color:#fff;letter-spacing:-0.051px;">Hủy HĐĐT</div>
<div style="position:absolute;left:0.00px;top:504.00px;width:1566px;height:1px;background:#dee2e6"></div>
<div class="t" style="left:13.30px;top:521.00px;font-size:15px;line-height:15px;color:#212529;letter-spacing:1.665px;">10</div>
<div class="t" style="left:58.50px;top:521.00px;font-size:15px;line-height:15px;color:#212529;letter-spacing:0.080px;">#RP8XA</div>
<div class="t" style="left:288.80px;top:521.00px;font-size:15px;line-height:15px;color:#212529;letter-spacing:1.144px;">00000012</div>
<div class="t" style="left:426.00px;top:521.00px;font-size:15px;line-height:15px;color:#212529;letter-spacing:1.001px;">270007</div>
<div class="t" style="left:510.30px;top:521.00px;font-size:15px;line-height:15px;color:#212529;letter-spacing:0.834px;">21/05/2025</div>
<div class="t" style="left:620.30px;top:521.00px;font-size:15px;line-height:15px;color:#212529;letter-spacing:0.844px;">0104789847</div>
<div class="t" style="left:740.00px;top:521.00px;font-size:15px;line-height:15px;color:#212529;letter-spacing:0.023px;">VŨ THANH HÙNG</div>
<div class="t" style="left:964.50px;top:521.00px;font-size:15px;line-height:15px;color:#212529;letter-spacing:-0.307px;">CÔNG TY CỔ PHẨN IPOS.VN</div>
<div style="position:absolute;left:125.00px;top:520.00px;width:34px;height:18px;background:#007bff;border-radius:9px"></div>
<div class="t" style="left:131.30px;top:524.00px;font-size:11px;line-height:11px;font-weight:700;color:#fff;letter-spacing:0.125px;">VAT</div>
<div style="position:absolute;left:1375.00px;top:517.00px;width:72px;height:31px;box-sizing:border-box;background:#337ab7;border:1px solid #2e6da4;border-radius:4px"></div>
<div class="t" style="left:1384.50px;top:526.00px;font-size:13px;line-height:13px;-webkit-text-stroke:0.45px #fff;color:#fff;letter-spacing:-0.027px;">Xuất VAT</div>
<div style="position:absolute;left:1471.00px;top:517.00px;width:82px;height:31px;box-sizing:border-box;background:#dc3545;border:1px solid #dc3545;border-radius:4px"></div>
<div class="t" style="left:1480.70px;top:526.00px;font-size:13px;line-height:13px;-webkit-text-stroke:0.45px #fff;color:#fff;letter-spacing:-0.051px;">Hủy HĐĐT</div>
<div style="position:absolute;left:0.00px;top:560.00px;width:1566px;height:1px;background:#dee2e6"></div>
<div class="t" style="left:13.30px;top:577.00px;font-size:15px;line-height:15px;color:#212529;letter-spacing:1.560px;">11</div>
<div class="t" style="left:58.50px;top:577.00px;font-size:15px;line-height:15px;color:#212529;letter-spacing:0.230px;">#JPBCJ</div>
<div class="t" style="left:288.80px;top:577.00px;font-size:15px;line-height:15px;color:#212529;letter-spacing:0.925px;">00000011</div>
<div class="t" style="left:426.00px;top:577.00px;font-size:15px;line-height:15px;color:#212529;letter-spacing:1.001px;">250008</div>
<div class="t" style="left:510.30px;top:577.00px;font-size:15px;line-height:15px;color:#212529;letter-spacing:0.681px;">19/05/2025</div>
<div class="t" style="left:620.30px;top:577.00px;font-size:15px;line-height:15px;color:#212529;">.</div>
<div class="t" style="left:740.00px;top:577.00px;font-size:15px;line-height:15px;color:#212529;letter-spacing:-0.219px;">Người mua không lấy hóa đơn</div>
<div class="t" style="left:964.50px;top:577.00px;font-size:15px;line-height:15px;color:#212529;letter-spacing:-0.219px;">Người mua không lấy hóa đơn</div>
<div style="position:absolute;left:122.00px;top:576.00px;width:34px;height:18px;background:#007bff;border-radius:9px"></div>
<div class="t" style="left:128.30px;top:580.00px;font-size:11px;line-height:11px;font-weight:700;color:#fff;letter-spacing:0.125px;">VAT</div>
<div style="position:absolute;left:1375.00px;top:573.00px;width:72px;height:31px;box-sizing:border-box;background:#337ab7;border:1px solid #2e6da4;border-radius:4px"></div>
<div class="t" style="left:1384.50px;top:582.00px;font-size:13px;line-height:13px;-webkit-text-stroke:0.45px #fff;color:#fff;letter-spacing:-0.027px;">Xuất VAT</div>
<div style="position:absolute;left:1471.00px;top:573.00px;width:82px;height:31px;box-sizing:border-box;background:#dc3545;border:1px solid #dc3545;border-radius:4px"></div>
<div class="t" style="left:1480.70px;top:582.00px;font-size:13px;line-height:13px;-webkit-text-stroke:0.45px #fff;color:#fff;letter-spacing:-0.051px;">Hủy HĐĐT</div>
<div style="position:absolute;left:0.00px;top:616.00px;width:1566px;height:1px;background:#dee2e6"></div>
<div class="t" style="left:13.30px;top:633.00px;font-size:15px;line-height:15px;color:#212529;letter-spacing:1.665px;">12</div>
<div class="t" style="left:58.50px;top:633.00px;font-size:15px;line-height:15px;color:#212529;letter-spacing:0.755px;">#F95O2</div>
<div class="t" style="left:288.80px;top:633.00px;font-size:15px;line-height:15px;color:#212529;letter-spacing:1.144px;">00000010</div>
<div class="t" style="left:426.00px;top:633.00px;font-size:15px;line-height:15px;color:#212529;letter-spacing:1.001px;">250002</div>
<div class="t" style="left:510.30px;top:633.00px;font-size:15px;line-height:15px;color:#212529;letter-spacing:0.681px;">19/05/2025</div>
<div class="t" style="left:620.30px;top:633.00px;font-size:15px;line-height:15px;color:#212529;letter-spacing:0.256px;">1801746183</div>
<div class="t" style="left:740.00px;top:633.00px;font-size:15px;line-height:15px;color:#212529;letter-spacing:-0.072px;">TRẨN THỊ HẠNH NHÂN</div>
<div class="t" style="left:964.50px;top:633.00px;font-size:15px;line-height:15px;color:#212529;letter-spacing:-0.265px;">CÔNG TY CỔ PHẨN NGUYÊN LIỆU TÀI VŨ PHÚC</div>
<div style="position:absolute;left:125.00px;top:632.00px;width:34px;height:18px;background:#007bff;border-radius:9px"></div>
<div class="t" style="left:131.30px;top:636.00px;font-size:11px;line-height:11px;font-weight:700;color:#fff;letter-spacing:0.125px;">VAT</div>
<div style="position:absolute;left:1375.00px;top:629.00px;width:72px;height:31px;box-sizing:border-box;background:#337ab7;border:1px solid #2e6da4;border-radius:4px"></div>
<div class="t" style="left:1384.50px;top:638.00px;font-size:13px;line-height:13px;-webkit-text-stroke:0.45px #fff;color:#fff;letter-spacing:-0.027px;">Xuất VAT</div>
<div style="position:absolute;left:1471.00px;top:629.00px;width:82px;height:31px;box-sizing:border-box;background:#dc3545;border:1px solid #dc3545;border-radius:4px"></div>
<div class="t" style="left:1480.70px;top:638.00px;font-size:13px;line-height:13px;-webkit-text-stroke:0.45px #fff;color:#fff;letter-spacing:-0.051px;">Hủy HĐĐT</div>
<svg style="position:absolute;left:111.00px;top:17.00px" width="16" height="16" viewBox="0 0 16 16"><circle cx="8" cy="8" r="7.3" fill="none" stroke="#dc3545" stroke-width="1.1"/><path d="M8 3.9V9.6" stroke="#dc3545" stroke-width="1.5"/><circle cx="8" cy="11.9" r="0.9" fill="#dc3545"/></svg>
<div style="position:absolute;left:288.00px;top:69.00px;width:112px;height:31px;box-sizing:border-box;border:1px solid #007bff;border-radius:4px;background:#fff"></div>
<div class="t" style="left:297.70px;top:78.00px;font-size:13px;line-height:13px;-webkit-text-stroke:0.3px #007bff;color:#007bff;letter-spacing:-0.208px;">Kéo lại số HĐ</div>
<svg style="position:absolute;left:381.00px;top:78.00px" width="10" height="12" viewBox="0 0 10 12"><path d="M1 1.5L5 5.5L9 1.5M1 6.5L5 10.5L9 6.5" stroke="#007bff" stroke-width="2" fill="none"/></svg>
</div>
<div style="position:absolute;left:342.5px;top:294.5px;width:231px;height:38px;box-sizing:border-box;background:#fff;border:1px solid #c4c4c4;border-radius:5px"></div>
<svg style="position:absolute;left:449px;top:331px" width="18" height="10" viewBox="0 0 18 10"><path d="M0.5 0.5L9 9L17.5 0.5" fill="#fff" stroke="#c4c4c4" stroke-width="1"/><rect x="1" y="-1" width="16" height="2" fill="#fff"/></svg>
<div class="t" style="left:355.80px;top:307px;font-size:13px;line-height:13px;color:#212529;letter-spacing:-0.030px;">Thông tin xác thực không chính xác</div>
<div style="position:absolute;left:1905px;top:247px;width:15px;height:733px;background:#f9f9f9"></div>
<div style="position:absolute;left:1908px;top:265px;width:9px;height:307px;background:#8b8b8b;border-radius:5px"></div>
<svg style="position:absolute;left:1907px;top:254px" width="9" height="5"><path d="M0 5H9L4.5 0Z" fill="#7a7a7a"/></svg>
<svg style="position:absolute;left:1907px;top:968px" width="9" height="5"><path d="M0 0H9L4.5 5Z" fill="#7a7a7a"/></svg>
<div style="position:absolute;left:339px;top:980px;width:1581px;height:15px;background:#f8f8f8"></div>
<div style="position:absolute;left:357px;top:983px;width:713px;height:9.5px;background:#8b8b8b;border-radius:5px"></div>
<svg style="position:absolute;left:344px;top:983px" width="6" height="9"><path d="M6 0V9L0 4.5Z" fill="#6b6b6b"/></svg>
<svg style="position:absolute;left:1893px;top:983px" width="6" height="9"><path d="M0 0V9L6 4.5Z" fill="#6b6b6b"/></svg>
<svg style="position:absolute;left:1893px;top:711px" width="27" height="70" viewBox="0 0 27 70"><defs><linearGradient id="chv" x1="0" y1="0" x2="0" y2="1"><stop offset="0" stop-color="#62b3e0"/><stop offset="1" stop-color="#2a78ad"/></linearGradient></defs><path d="M27 1.5H1.5V42.5L27 68" fill="#f2f2f2" stroke="#9a9a9a" stroke-width="1"/><path d="M15.5 11L7.5 20.5L15.5 30H22L14 20.5L22 11Z" fill="url(#chv)"/><path d="M6 30.5H23" stroke="#b8b8b8" stroke-width="1.2"/></svg>
<div style="position:absolute;left:0px;top:1040px;width:1920px;height:40px;background:#1c1f23"></div>
<svg style="position:absolute;left:15px;top:1051px" width="18" height="18" viewBox="0 0 18 18"><path d="M0.5 2.2L7.8 1.2V8.4H0.5Z M8.8 1.05L17.3 0V8.4H8.8Z M0.5 9.4H7.8V16.7L0.5 15.7Z M8.8 9.4H17.3V17.9L8.8 16.8Z" fill="#fff"/></svg>
<svg style="position:absolute;left:63px;top:1052px" width="18" height="16" viewBox="0 0 18 16"><path d="M0.5 0.5H12.5M0.5 15.5H12.5" stroke="#fff" stroke-width="1"/><rect x="1.5" y="3.5" width="10" height="9" fill="none" stroke="#fff" stroke-width="1"/><path d="M15.5 0V2M15.5 5V16" stroke="#fff" stroke-width="1.2"/><rect x="14" y="2.5" width="3" height="2.5" fill="#fff"/></svg>
<svg style="position:absolute;left:112px;top:1050px" width="22" height="21" viewBox="0 0 22 21"><defs><linearGradient id="cpl" x1="0" y1="0" x2="0" y2="1"><stop offset="0" stop-color="#25c2ff"/><stop offset=".35" stop-color="#1596dc"/><stop offset=".65" stop-color="#5fb257"/><stop offset="1" stop-color="#f5d000"/></linearGradient><linearGradient id="cpr" x1="0" y1="0" x2="0" y2="1"><stop offset="0" stop-color="#b95ff2"/><stop offset=".5" stop-color="#f0559a"/><stop offset="1" stop-color="#ffb75a"/></linearGradient></defs><path d="M11.5 0.5H16.6Q17.8 0.5 18.3 1.6L20.4 6H13.2Z" fill="#1247d6"/><path d="M4.5 14.5H9.2L10.8 20.5H7Q6 20.5 5.7 19.4Z" fill="#f0602e"/><path d="M5.5 0.5H12.5Q13.6 0.5 13.3 1.6L9.3 13.4Q9 14.5 7.8 14.5H1.4Q0.2 14.5 0.5 13.3L4.3 1.6Q4.6 0.5 5.5 0.5Z" fill="url(#cpl)"/><path d="M14.6 5.5H20.6Q21.8 5.5 21.5 6.7L17.6 19.4Q17.3 20.5 16.1 20.5H9.6Q8.4 20.5 8.7 19.3L12.7 6.6Q13 5.5 14.6 5.5Z" fill="url(#cpr)"/></svg>
<svg style="position:absolute;left:160px;top:1050px" width="23" height="20" viewBox="0 0 23 20"><path d="M0.5 2Q0.5 0.5 2 0.5H8L10 2.5H21Q22.5 2.5 22.5 4V18Q22.5 19.5 21 19.5H2Q0.5 19.5 0.5 18Z" fill="#f8c843"/><path d="M0.5 4H22.5V18Q22.5 19.5 21 19.5H2Q0.5 19.5 0.5 18Z" fill="#ffd75e"/><path d="M6 11H17V19.5H14V14H9V19.5H6Z" fill="#3a8ee6"/></svg>
<div style="position:absolute;left:152px;top:1078px;width:40px;height:2px;background:#76b9ed"></div>
<svg style="position:absolute;left:209px;top:1048px" width="24" height="24" viewBox="0 0 24 24"><defs><linearGradient id="ed1" x1="0" y1="1" x2="1" y2="0"><stop offset="0" stop-color="#0b57a8"/><stop offset=".45" stop-color="#1e90e0"/><stop offset=".75" stop-color="#33b9e8"/><stop offset="1" stop-color="#5fd67a"/></linearGradient></defs><circle cx="12" cy="12" r="11.8" fill="url(#ed1)"/><path d="M23.8 12.5Q23 9 18 8.5Q11 8.5 10.5 13.5Q10.5 17 14 18.5Q7 19 5.5 13Q5 7 12 5Q20 4 23.8 12.5Z" fill="#1d6fc4" opacity=".55"/><path d="M11 13.5Q11.5 10.5 15.5 10.5Q19.5 10.8 20 13.5Z" fill="#1c1f23"/><path d="M23.8 13.5Q22 23 12 23.8Q17 22 19.5 19Q14.5 20 12 17.5Q20 17.5 23.8 13.5Z" fill="#49c97e"/></svg>
<div style="position:absolute;left:201px;top:1078px;width:40px;height:2px;background:#76b9ed"></div>
<svg style="position:absolute;left:257px;top:1051px" width="25" height="17" viewBox="0 0 25 17"><rect width="25" height="17" rx="4" fill="#f0212b"/><path d="M10 5L17 8.5L10 12Z" fill="#fff"/></svg>
<svg style="position:absolute;left:308px;top:1048.5px" width="23" height="23" viewBox="0 0 23 23"><defs><linearGradient id="ya" x1="0" y1="0" x2="0" y2="1"><stop offset="0" stop-color="#ffe14a"/><stop offset="1" stop-color="#f8c000"/></linearGradient></defs><rect x="0.2" y="0.2" width="22.4" height="22.4" rx="7" fill="url(#ya)"/><path d="M5.6 12.2A5.4 5.4 0 1 1 11 17.6" fill="none" stroke="#1c1c1c" stroke-width="2.6"/><path d="M5.6 12V14.3M11 17.6H9.2" stroke="#1c1c1c" stroke-width="2.6"/><rect x="4.3" y="15.6" width="2.8" height="2.8" fill="#1c1c1c"/><path d="M11 9L11.7 11.3L13.8 12L11.7 12.7L11 15L10.3 12.7L8.2 12L10.3 11.3Z" fill="#1c1c1c"/></svg>
<div style="position:absolute;left:344px;top:1040px;width:48px;height:40px;background:#45484d"></div>
<div style="position:absolute;left:344px;top:1078px;width:48px;height:2px;background:#76b9ed"></div>
<svg style="position:absolute;left:356px;top:1048px" width="26" height="26" viewBox="0 0 26 26"><path d="M12 12L2.04 6.25A11.5 11.5 0 0 1 21.96 6.25Z" fill="#e53d30"/><path d="M12 12L21.96 6.25A11.5 11.5 0 0 1 12 23.5Z" fill="#f9c21a"/><path d="M12 12L12 23.5A11.5 11.5 0 0 1 2.04 6.25Z" fill="#21a045"/><circle cx="12" cy="12" r="5.4" fill="#fff"/><circle cx="12" cy="12" r="4.3" fill="#3f7fe8"/><circle cx="18" cy="18" r="7.8" fill="#f4511e"/><text x="18" y="21.8" font-family="Liberation Sans" font-size="10.5" font-weight="bold" fill="#fff" text-anchor="middle">T</text></svg>
<svg style="position:absolute;left:405px;top:1049px" width="24" height="21" viewBox="0 0 24 21"><rect x="6" y="0" width="18" height="21" rx="1.5" fill="#107c41"/><rect x="15" y="0" width="9" height="7" fill="#33c481"/><rect x="15" y="7" width="9" height="7" fill="#21a366"/><rect x="6" y="14" width="18" height="7" fill="#185c37"/><rect x="0" y="5" width="12" height="12" rx="1.5" fill="#0e6b38"/><path d="M3 8L9 14M9 8L3 14" stroke="#fff" stroke-width="1.8"/></svg>
<svg style="position:absolute;left:454px;top:1048px" width="24" height="24" viewBox="0 0 24 24"><circle cx="12" cy="12" r="12" fill="#2f7fd8"/><rect x="5.5" y="6" width="13" height="9" fill="none" stroke="#fff" stroke-width="1.4"/><path d="M7 14L17 7V14Z" fill="#fff"/><path d="M10 17.5H14M12 15V17.5" stroke="#fff" stroke-width="1.4"/></svg>
<div style="position:absolute;left:446px;top:1078px;width:40px;height:2px;background:#76b9ed"></div>
<div style="position:absolute;left:484px;top:1078px;width:3px;height:2px;background:#5a8fbf"></div>
<svg style="position:absolute;left:1695px;top:1056px" width="13" height="8" viewBox="0 0 13 8"><path d="M0.5 7.5L6.5 1L12.5 7.5" stroke="#fff" stroke-width="1.2" fill="none"/></svg>
<svg style="position:absolute;left:1717px;top:1054px" width="17" height="14" viewBox="0 0 17 14"><rect x="3.5" y="1.5" width="13" height="8" fill="none" stroke="#fff" stroke-width="1"/><path d="M10 9.5V12M6 13H14" stroke="#fff" stroke-width="1"/><rect x="0.5" y="0.5" width="3.5" height="3" fill="#1c1f23" stroke="#fff" stroke-width="0.8"/></svg>
<svg style="position:absolute;left:1740px;top:1054px" width="18" height="14" viewBox="0 0 18 14"><path d="M1 4.5H4L8 1V13L4 9.5H1Z" fill="none" stroke="#fff" stroke-width="1"/><path d="M10.5 4.5Q12 7 10.5 9.5M12.5 3Q15 7 12.5 11" fill="none" stroke="#fff" stroke-width="1"/><path d="M14.5 1.5Q18 7 14.5 12.5" fill="none" stroke="#888" stroke-width="1"/></svg>
<div class="t" style="left:1767.30px;top:1054px;font-size:12px;line-height:12px;color:#fff;transform:scaleX(0.86);transform-origin:0 0;">ENG</div>
<div class="t" style="left:1811.00px;top:1046px;font-size:11px;line-height:11px;color:#fff;letter-spacing:-0.381px;">12:16 SA</div>
<div class="t" style="left:1803.00px;top:1063px;font-size:12px;line-height:12px;color:#fff;letter-spacing:-0.229px;">26/05/2025</div>
<svg style="position:absolute;left:1878px;top:1051px" width="27" height="26" viewBox="0 0 27 26"><path d="M1 1.5H17V13H9L6 16V13H1Z" fill="#fff"/><path d="M3.5 4.5H14.5M3.5 7H14.5M3.5 9.5H11" stroke="#1c1f23" stroke-width="1"/><circle cx="17" cy="17" r="8" fill="#1c1f23" stroke="#aaa" stroke-width="1"/><text x="17.5" y="21" font-family="Liberation Sans" font-size="11" fill="#fff" text-anchor="middle">1</text></svg>
<div style="position:absolute;left:1915px;top:1040px;width:1px;height:40px;background:#5a5d61"></div>
</body></html>
